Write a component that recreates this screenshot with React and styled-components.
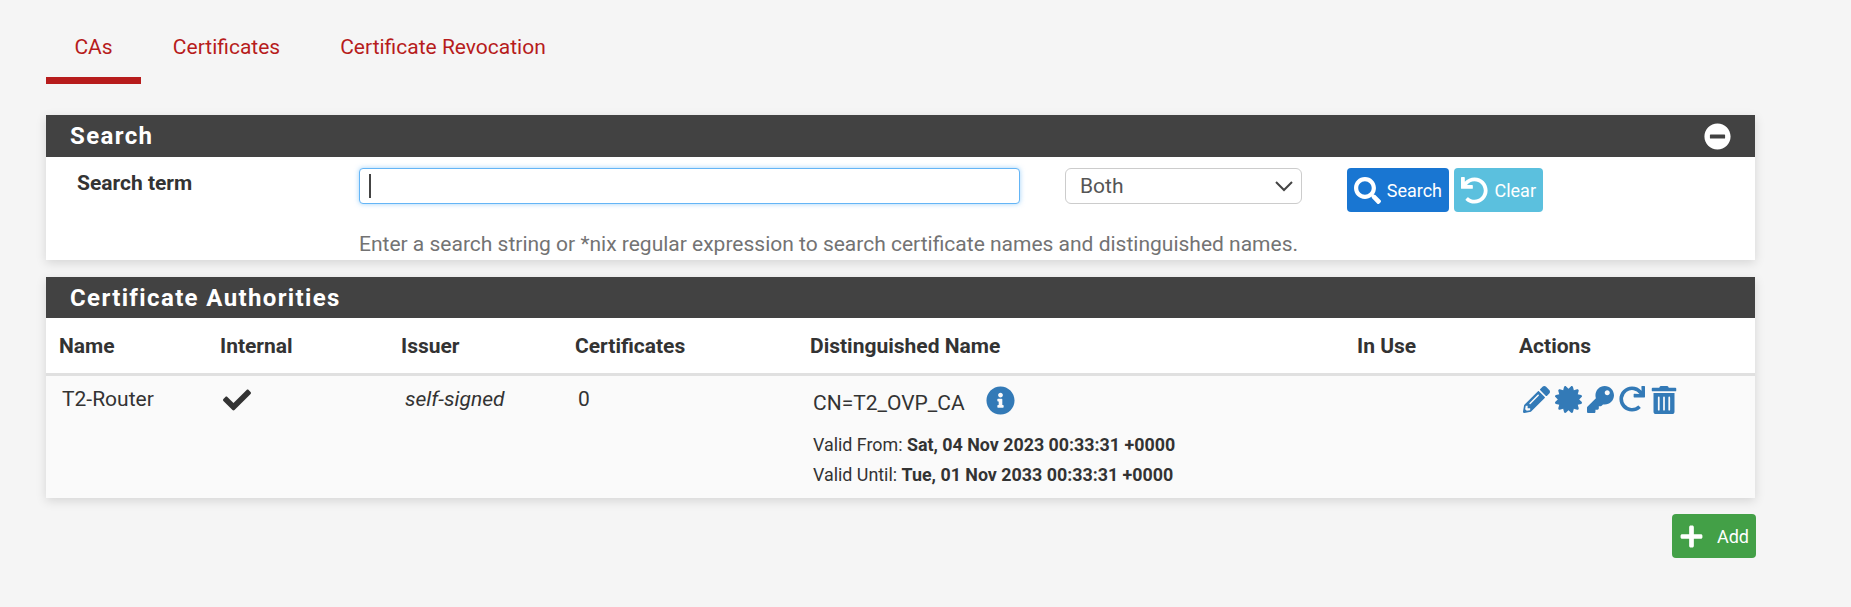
import React from "react";
import styled, { createGlobalStyle } from "styled-components";
import { FaPencilAlt, FaCertificate, FaKey, FaRedo, FaTrashAlt, FaCheck, FaInfoCircle, FaMinusCircle, FaSearch, FaUndo, FaPlus } from "react-icons/fa";

const Global = createGlobalStyle`
  html, body { margin: 0; padding: 0; background: #f5f5f5; }
  body { font-family: Roboto, "Liberation Sans", sans-serif; color: #333; font-size: 21px; }
`;
const Page = styled.div`
  width: 1851px; height: 607px; box-sizing: border-box; padding: 0 96px 0 46px; overflow: hidden;
`;
const Tabs = styled.nav`
  display: flex; height: 84px; margin-bottom: 31px;
`;
const Tab = styled.a`
  box-sizing: border-box; height: 84px; padding: 34px 0 0; color: #b71c1c; font-size: 21px; line-height: 26px;
  text-align: center; width: ${p => p.$w}px; white-space: nowrap;
  border-bottom: ${p => (p.$active ? "7px solid #b71c1c" : "none")};
`;
const Panel = styled.section`
  background: ${p => p.$bg || "#fff"}; margin-bottom: ${p => p.$mb || 0}px;
  box-shadow: 0 3px 10px rgba(0,0,0,.13);
`;
const Heading = styled.header`
  display: flex; align-items: center; justify-content: space-between; box-sizing: border-box;
  height: ${p => p.$h}px; background: #424242; color: #fff; padding: 0 24px;
  font-size: 24px; font-weight: 700; letter-spacing: 1.37px;
`;
const SearchBody = styled.div`
  display: grid; grid-template-columns: 313px 661px 45px 237px 45px 102px 5px 89px 1fr;
  grid-template-rows: 51px 52px; height: 103px; box-sizing: border-box; padding-top: 11px;
`;
const Label = styled.div`
  padding-left: 31px; font-weight: 700; font-size: 21px; line-height: 26px; padding-top: 2px;
`;
const Input = styled.div`
  box-sizing: border-box; height: 36px; border: 1px solid #64b5f6; border-radius: 4px; background: #fff;
  box-shadow: 0 0 5px rgba(100,181,246,.6); padding: 5px 9px;
  display: flex; align-items: center;
`;
const Caret = styled.span`
  display: block; width: 1.5px; height: 24px; background: #444;
`;
const Select = styled.div`
  grid-column: 4; box-sizing: border-box; height: 36px; border: 1px solid #ccc; border-radius: 6px;
  display: flex; align-items: center; justify-content: space-between; padding: 0 7px 0 14px; color: #555; font-size: 21px;
`;
const Btn = styled.button`
  grid-column: ${p => p.$col}; box-sizing: border-box; height: 44px; border: 0; border-radius: 4px;
  background: ${p => p.$bg}; color: #fff; font: 400 18px Roboto, sans-serif; padding: 0 7px; margin: 0;
  display: flex; align-items: center; justify-content: space-between;
`;
const Help = styled.div`
  grid-column: 2 / 9; grid-row: 2; font-size: 21px; color: #737373; line-height: 26px; padding-top: 12px; white-space: nowrap;
`;
const Table = styled.div`
  display: grid; grid-template-columns: 161px 181px 174px 235px 547px 162px 1fr;
`;
const Th = styled.div`
  height: 58px; box-sizing: border-box; border-bottom: 3px solid #e0e0e0; background: #fff; font-weight: 700;
  padding: 15px 0 0 13px; font-size: 21px; line-height: 26px; white-space: nowrap;
`;
const Td = styled.div`
  height: 122px; box-sizing: border-box; background: #fafafa; padding: 10px 0 0 ${p => (p.$i ? 17 : 16)}px; font-size: 21px; line-height: 26px;
  font-style: ${p => (p.$i ? "italic" : "normal")};
`;
const CnRow = styled.div`
  display: flex; align-items: flex-start; gap: 21px; margin-bottom: 14px;
  span { margin-top: 4px; }
`;
const Valid = styled.div`
  font-size: 17.85px; line-height: 29.5px; white-space: nowrap;
  b { font-weight: 700; }
`;
const Actions = styled.div`
  display: flex; align-items: flex-start; gap: 5px; color: #337ab7; margin-left: 1px;
`;
const Footer = styled.div`
  display: flex; justify-content: flex-end; margin: 16px -1px 0 0;
`;
const AddBtn = styled.button`
  box-sizing: border-box; width: 84px; height: 44px; border: 0; border-radius: 4px; background: #43a047; color: #fff;
  font: 400 18px Roboto, sans-serif; display: flex; align-items: center; justify-content: space-between; padding: 0 7px;
`;

export default function App() {
  return (
    <Page>
      <Global />
      <Tabs>
        <Tab $w={95} $active>CAs</Tab>
        <Tab $w={171}>Certificates</Tab>
        <Tab $w={262}>Certificate Revocation</Tab>
      </Tabs>
      <Panel $mb={17}>
        <Heading $h={42}>
          <span>Search</span>
          <FaMinusCircle size={27} color="#fff" />
        </Heading>
        <SearchBody>
          <Label>Search term</Label>
          <Input><Caret /></Input>
          <Select>
            <span>Both</span>
            <svg width="20" height="12" viewBox="0 0 20 12" fill="none" stroke="#444" strokeWidth="2"><path d="M2 2l8 8 8-8" /></svg>
          </Select>
          <Btn $col={6} $bg="#1976d2"><FaSearch size={27} /><span>Search</span></Btn>
          <Btn $col={8} $bg="#5bc0de"><FaUndo size={27} /><span>Clear</span></Btn>
          <Help>Enter a search string or *nix regular expression to search certificate names and distinguished names.</Help>
        </SearchBody>
      </Panel>
      <Panel $bg="#fafafa">
        <Heading $h={41}><span>Certificate Authorities</span></Heading>
        <Table>
          <Th>Name</Th><Th>Internal</Th><Th>Issuer</Th><Th>Certificates</Th><Th>Distinguished Name</Th><Th>In Use</Th><Th>Actions</Th>
          <Td>T2-Router</Td>
          <Td><FaCheck size={28} /></Td>
          <Td $i>self-signed</Td>
          <Td>0</Td>
          <Td>
            <CnRow><span>CN=T2_OVP_CA</span><FaInfoCircle size={29} color="#337ab7" /></CnRow>
            <Valid>Valid From: <b>Sat, 04 Nov 2023 00:33:31 +0000</b></Valid>
            <Valid>Valid Until: <b>Tue, 01 Nov 2033 00:33:31 +0000</b></Valid>
          </Td>
          <Td />
          <Td>
            <Actions>
              <FaPencilAlt size={27} /><FaCertificate size={27} /><FaKey size={27} /><FaRedo size={26} /><FaTrashAlt size={28} />
            </Actions>
          </Td>
        </Table>
      </Panel>
      <Footer>
        <AddBtn><FaPlus size={25} /><span>Add</span></AddBtn>
      </Footer>
    </Page>
  );
}
